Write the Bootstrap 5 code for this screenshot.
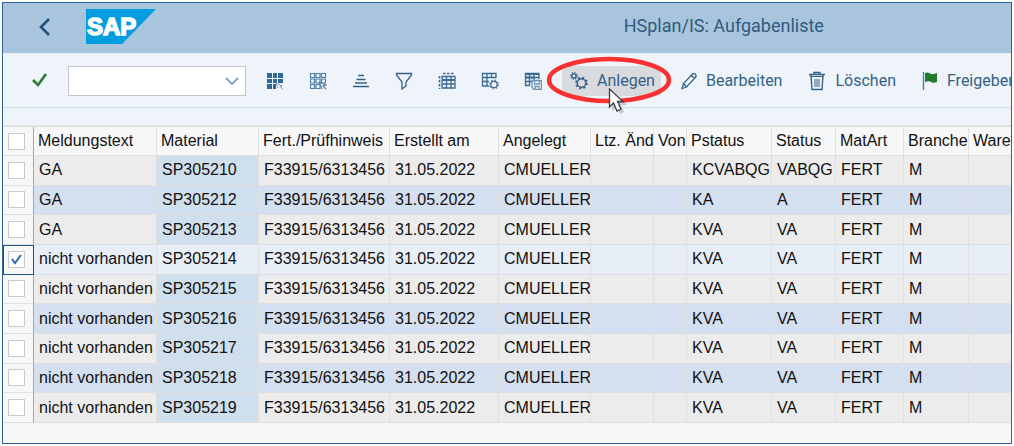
<!DOCTYPE html>
<html lang="de">
<head>
<meta charset="utf-8">
<meta name="viewport" content="width=device-width, initial-scale=1">
<title>HSplan/IS: Aufgabenliste</title>
<link rel="stylesheet" href="https://cdn.jsdelivr.net/npm/bootstrap@5.3.0/dist/css/bootstrap.min.css">
<style>
  body { padding: 2px; background: #fff; font-family: "Liberation Sans", Arial, sans-serif; }
  .sap-window { border: 1px solid #2b619f; background: #f7f7f7; overflow: hidden; }
  .shell-bar { height: 50px; background: #a9c5de; padding: 0 0 4px 26px; }
  .shell-title { flex: none; margin: 0; font: 400 18px/24px Roboto, sans-serif; color: #2f5a7d; white-space: nowrap; }
  .back-btn { width: 32px; padding: 0; border: 0; }
  .logo { width: 70px; height: 35px; margin-left: 25px; }
  .space-wide { flex: 5 1 0; }
  .space-slim { flex: 2 1 0; }
  .tool-bar { height: 55px; background: #eef4f9; border-bottom: 1px solid #cfe0ee; border-top: 1px solid #e6eef5; padding-left: 26px; }
  .tool-bar .btn { flex: none; display: flex; align-items: center; height: 30px; border: 0; border-radius: 2px; padding: 0 6px 0 8px; gap: 9px; font: 400 16px/20px Roboto, sans-serif; color: #346187; white-space: nowrap; }
  .tool-bar .btn.icon-only { width: 43px; padding: 0; justify-content: center; }
  .tool-bar .btn.confirm { width: 22px; }
  .tool-bar .btn.active-tool { background: #d9dadd; }
  .tool-bar .btn.labelled { margin-left: 12px; }
  .tool-bar svg { flex: none; }
  .command { flex: none; width: 178px; height: 30px; margin: 0 7px 0 17px; border: 1px solid #c3c7ca; border-radius: 0; background-color: #fff; padding: 0 32px 0 8px;
    background-image: url("data:image/svg+xml,%3Csvg xmlns='http://www.w3.org/2000/svg' viewBox='0 0 14 14'%3E%3Cpath fill='none' stroke='%235d8ab8' stroke-width='1.5' d='M1 4l6 6 6-6'/%3E%3C/svg%3E");
    background-size: 14px 14px; background-position: right 6px center; }
  .marker { position: absolute; left: -17px; top: -11px; pointer-events: none; z-index: 2; }
  .spacer-strip { height: 19px; background: #eef4f9; border-bottom: 2px solid #e0e1e2; }
  .task-list { width: 100%; height: 296px; table-layout: fixed; border-collapse: separate; border-spacing: 0; color: #111; font-size: 16px; line-height: 20px; }
  .task-list thead th { height: 29px; }
  .task-list th, .task-list td { padding: 0 0 0 5px; border-right: 1px solid #e0e0e0; border-bottom: 1px solid #dfdfdf; font-weight: 400; white-space: nowrap; overflow: hidden; vertical-align: middle; }
  .task-list thead th { background: #f7f7f7; padding-left: 4px; }
  .task-list tbody td { background: #ececec; }
  .task-list tbody tr.band td { background: #d4dfef; }
  .task-list tbody tr td.key { background: #cfdfee; }
  .task-list tbody tr.picked td, .task-list tbody tr.picked td.key { background: #e7eef7; }
  .task-list tr > .pick { background: #f7f7f7 !important; padding: 0 0 0 5px; border-right: 1px solid #a6a6a6; }
  .task-list .picked .pick { border: 1px solid #24517c; padding-left: 4px; }
  .task-list tr > :last-child { border-right: 0; }
  .pick .form-check-input { display: block; width: 17px; height: 17px; margin: 0; border: 1px solid #c8cacc; border-radius: 0; background-color: #fff; box-shadow: none; }
  .pick .form-check-input:checked { background-size: 17px 17px; background-image: url("data:image/svg+xml,%3Csvg xmlns='http://www.w3.org/2000/svg' viewBox='0 0 17 17'%3E%3Cpath fill='none' stroke='%232d6ca8' stroke-width='2' d='M4 8l3 4 6-8'/%3E%3C/svg%3E"); }
  .w-pick { width: 31px; } .w-text { width: 123px; } .w-mat { width: 102px; } .w-hint { width: 131px; }
  .w-date { width: 109px; } .w-user { width: 92px; } .w-chg { width: 63px; } .w-from { width: 33px; }
  .w-pst { width: 85px; } .w-st { width: 64px; } .w-art { width: 68px; } .w-br { width: 65px; }
</style>
</head>
<body class="min-vh-100 d-flex flex-column">
<main class="sap-window flex-grow-1">
  <header class="shell-bar d-flex align-items-center">
    <button class="btn back-btn" type="button" aria-label="Zurück">
      <svg width="14" height="20" viewBox="0 0 14 20" fill="none" stroke="#24517c" stroke-width="2.6"><path d="M11 2L3 10l8 8"/></svg>
    </button>
    <svg class="logo" viewBox="0 0 70 35" role="img" aria-label="SAP">
      <path fill="#009de0" d="M0 0h70L36 35H0z"/>
      <text x="1" y="26" font-family="Liberation Sans, Arial, sans-serif" font-weight="700" font-size="24" fill="#fff" stroke="#fff" stroke-width="1.500">SAP</text>
    </svg>
    <span class="space-wide"></span>
    <h1 class="shell-title">HSplan/IS: Aufgabenliste</h1>
    <span class="space-slim"></span>
  </header>

  <div class="tool-bar d-flex align-items-center" role="toolbar" aria-label="Funktionen">
    <button class="btn icon-only confirm" type="button" aria-label="Bestätigen">
      <svg width="18" height="18" viewBox="0 0 18 18" fill="none" stroke="#2a7d33" stroke-width="2.6"><path d="M2 8l5 5 8-11"/></svg>
    </button>
    <select class="form-select command" aria-label="Transaktion"><option value=""></option></select>
    <button class="btn icon-only" type="button" aria-label="Alle markieren">
      <svg width="18" height="18" viewBox="0 0 18 18" fill="#2f6796"><path d="M1 1h5v5H1zM7 1h4v5H7zM12 1h5v5h-5zM1 7h5v4H1zM7 7h4v4H7zM12 7h5v4h-5zM1 12h5v5H1zM7 12h3v5H7z"/><path d="M10 11l6 3-2 .6 3 3M10 11l2 5" fill="none" stroke="#7fa3c2"/></svg>
    </button>
    <button class="btn icon-only" type="button" aria-label="Alle entmarkieren">
      <svg width="18" height="18" viewBox="0 0 18 18" fill="none" stroke="#5580a5" stroke-width="1.200"><path d="M1.500 1.500h4v4h-4zM7 1.500h4v4H7zM12.500 1.500h4v4h-4zM1.500 7h4v4h-4zM7 7h4v4H7zM12.500 7h4v4h-4zM1.500 12.500h4v4h-4zM7 12.500h4v4H7z"/><path d="M10 10l7 3-3 1 3 3M10 10l3 7"/></svg>
    </button>
    <button class="btn icon-only" type="button" aria-label="Sortieren">
      <svg width="18" height="18" viewBox="0 0 18 18" fill="none" stroke="#346187" stroke-width="1.300"><path d="M6 3.500h6M4.500 7.500h9M3 11h12M1 14.500h16"/></svg>
    </button>
    <button class="btn icon-only" type="button" aria-label="Filtern">
      <svg width="18" height="18" viewBox="0 0 18 18" fill="none" stroke="#346187" stroke-width="1.300"><path d="M1.500 1.500h15v1.500L11 10v4l-4 3v-7L1.500 3z"/></svg>
    </button>
    <button class="btn icon-only" type="button" aria-label="Summe">
      <svg width="18" height="18" viewBox="0 0 18 18" fill="none" stroke="#3d6b93" stroke-width="1.300"><path d="M4 4.500h13v11.500H4zM4 8h13M4 12h13M8.500 4v12M13 4v12"/><path stroke-width="2" d="M4 8h13"/><path d="M5 1.500h12" stroke-width="1.600" stroke-dasharray="2.500 1.500"/><path d="M1.500 4v13" stroke-width="1.600" stroke-dasharray="2.500 1.500"/></svg>
    </button>
    <button class="btn icon-only" type="button" aria-label="Layout ändern">
      <svg width="18" height="18" viewBox="0 0 18 18" fill="none" stroke="#3d6b93" stroke-width="1.300"><path d="M8 14H1.500V1.500h13.500V6M1.500 5.500H15M1.500 9.500H8M6 1.500V14M10.500 1.500V6"/><circle cx="13" cy="12.500" r="3.200"/><circle cx="13" cy="12.500" r="4.300" stroke-dasharray="1.400 2"/></svg>
    </button>
    <button class="btn icon-only" type="button" aria-label="Layout sichern">
      <svg width="18" height="18" viewBox="0 0 18 18" fill="none" stroke="#3d6b93" stroke-width="1.300"><path d="M6 13.500H1.500v-12H15V7M1.500 5.500H15M1.500 9.500H8M5.500 1.500v12M10 1.500V8"/><path stroke-width="2" d="M1.500 2H15M2 5.500h9"/><path fill="#eef4f9" stroke="#6c93b5" d="M8 8.500h9.500v9H10l-2-2z"/><path stroke="#6c93b5" d="M10.500 9v3h5V9M11 17v-2.500h4V17"/></svg>
    </button>
    <div class="position-relative ms-2">
      <button class="btn active-tool" type="button">
        <svg width="18" height="18" viewBox="0 0 18 18" fill="none" stroke="#346187" stroke-width="1.400"><circle cx="4" cy="4" r="2.100"/><circle cx="4" cy="4" r="3.200" stroke-dasharray="1.200 1.300"/><circle cx="11.500" cy="11" r="4.200"/><circle cx="11.500" cy="11" r="5.400" stroke-width="1.800" stroke-dasharray="2.100 2.140"/></svg>
        <span>Anlegen</span>
      </button>
      <svg class="marker" width="130" height="60" viewBox="0 0 130 60" aria-hidden="true">
        <ellipse cx="64" cy="25" rx="60" ry="21" fill="none" stroke="#fb3030" stroke-width="4.500"/>
        <path fill="#a9acb0" opacity=".6" d="M67 37v19l5-4 3 7 4-2-3-7h6z"/>
        <path fill="#fff" stroke="#3c3f42" stroke-width="1.300" d="M64.500 34v18l4-4 3.500 8 4-2-3.500-7.500h5.500z"/>
      </svg>
    </div>
    <button class="btn labelled" type="button">
      <svg width="16" height="18" viewBox="0 0 16 18" fill="none" stroke="#346187" stroke-width="1.300"><path d="M1 16.500l1.500-5L11.500 2q1.500-1 3 .3 1.200 1.400 0 3L5.500 15zM2.500 11.500l3 3.500M10.500 3.500l3 3"/></svg>
      <span>Bearbeiten</span>
    </button>
    <button class="btn labelled" type="button">
      <svg width="18" height="20" viewBox="0 0 18 20" fill="none" stroke="#346187" stroke-width="1.400"><path d="M1 3.500h16M6 3V1.500h6V3M3 4l1 14.500h10L15 4" /><path d="M2.500 5.500h13M7 8v8M9 8v8M11 8v8" stroke-width="1"/></svg>
      <span>Löschen</span>
    </button>
    <button class="btn labelled" type="button">
      <svg width="16" height="20" viewBox="0 0 16 20"><path d="M1.500 1v18" stroke="#4384b5" stroke-width="1.400"/><path fill="#227a2b" d="M3 2q3-1 5 .5T15 2v9q-4 1.500-6 0t-6 0z"/></svg>
      <span>Freigeben</span>
    </button>
  </div>
  <div class="spacer-strip"></div>

  <table class="task-list">
    <colgroup><col class="w-pick"><col class="w-text"><col class="w-mat"><col class="w-hint"><col class="w-date"><col class="w-user"><col class="w-chg"><col class="w-from"><col class="w-pst"><col class="w-st"><col class="w-art"><col class="w-br"><col></colgroup>
    <thead>
      <tr><th class="pick"><input class="form-check-input" type="checkbox" aria-label="Alle Zeilen"></th><th>Meldungstext</th><th>Material</th><th>Fert./Prüfhinweis</th><th>Erstellt am</th><th>Angelegt</th><th>Ltz. Änd</th><th>Von</th><th>Pstatus</th><th>Status</th><th>MatArt</th><th>Branche</th><th>Ware</th></tr>
    </thead>
    <tbody>
      <tr><td class="pick"><input class="form-check-input" type="checkbox" aria-label="SP305210"></td><td>GA</td><td class="key">SP305210</td><td>F33915/6313456</td><td>31.05.2022</td><td>CMUELLER</td><td></td><td></td><td>KCVABQG</td><td>VABQG</td><td>FERT</td><td>M</td><td></td></tr>
      <tr class="band"><td class="pick"><input class="form-check-input" type="checkbox" aria-label="SP305212"></td><td>GA</td><td class="key">SP305212</td><td>F33915/6313456</td><td>31.05.2022</td><td>CMUELLER</td><td></td><td></td><td>KA</td><td>A</td><td>FERT</td><td>M</td><td></td></tr>
      <tr><td class="pick"><input class="form-check-input" type="checkbox" aria-label="SP305213"></td><td>GA</td><td class="key">SP305213</td><td>F33915/6313456</td><td>31.05.2022</td><td>CMUELLER</td><td></td><td></td><td>KVA</td><td>VA</td><td>FERT</td><td>M</td><td></td></tr>
      <tr class="picked"><td class="pick"><input class="form-check-input" type="checkbox" aria-label="SP305214" checked></td><td>nicht vorhanden</td><td class="key">SP305214</td><td>F33915/6313456</td><td>31.05.2022</td><td>CMUELLER</td><td></td><td></td><td>KVA</td><td>VA</td><td>FERT</td><td>M</td><td></td></tr>
      <tr><td class="pick"><input class="form-check-input" type="checkbox" aria-label="SP305215"></td><td>nicht vorhanden</td><td class="key">SP305215</td><td>F33915/6313456</td><td>31.05.2022</td><td>CMUELLER</td><td></td><td></td><td>KVA</td><td>VA</td><td>FERT</td><td>M</td><td></td></tr>
      <tr class="band"><td class="pick"><input class="form-check-input" type="checkbox" aria-label="SP305216"></td><td>nicht vorhanden</td><td class="key">SP305216</td><td>F33915/6313456</td><td>31.05.2022</td><td>CMUELLER</td><td></td><td></td><td>KVA</td><td>VA</td><td>FERT</td><td>M</td><td></td></tr>
      <tr><td class="pick"><input class="form-check-input" type="checkbox" aria-label="SP305217"></td><td>nicht vorhanden</td><td class="key">SP305217</td><td>F33915/6313456</td><td>31.05.2022</td><td>CMUELLER</td><td></td><td></td><td>KVA</td><td>VA</td><td>FERT</td><td>M</td><td></td></tr>
      <tr class="band"><td class="pick"><input class="form-check-input" type="checkbox" aria-label="SP305218"></td><td>nicht vorhanden</td><td class="key">SP305218</td><td>F33915/6313456</td><td>31.05.2022</td><td>CMUELLER</td><td></td><td></td><td>KVA</td><td>VA</td><td>FERT</td><td>M</td><td></td></tr>
      <tr><td class="pick"><input class="form-check-input" type="checkbox" aria-label="SP305219"></td><td>nicht vorhanden</td><td class="key">SP305219</td><td>F33915/6313456</td><td>31.05.2022</td><td>CMUELLER</td><td></td><td></td><td>KVA</td><td>VA</td><td>FERT</td><td>M</td><td></td></tr>
    </tbody>
  </table>
</main>
<script src="https://cdn.jsdelivr.net/npm/bootstrap@5.3.0/dist/js/bootstrap.bundle.min.js"></script>
</body>
</html>
